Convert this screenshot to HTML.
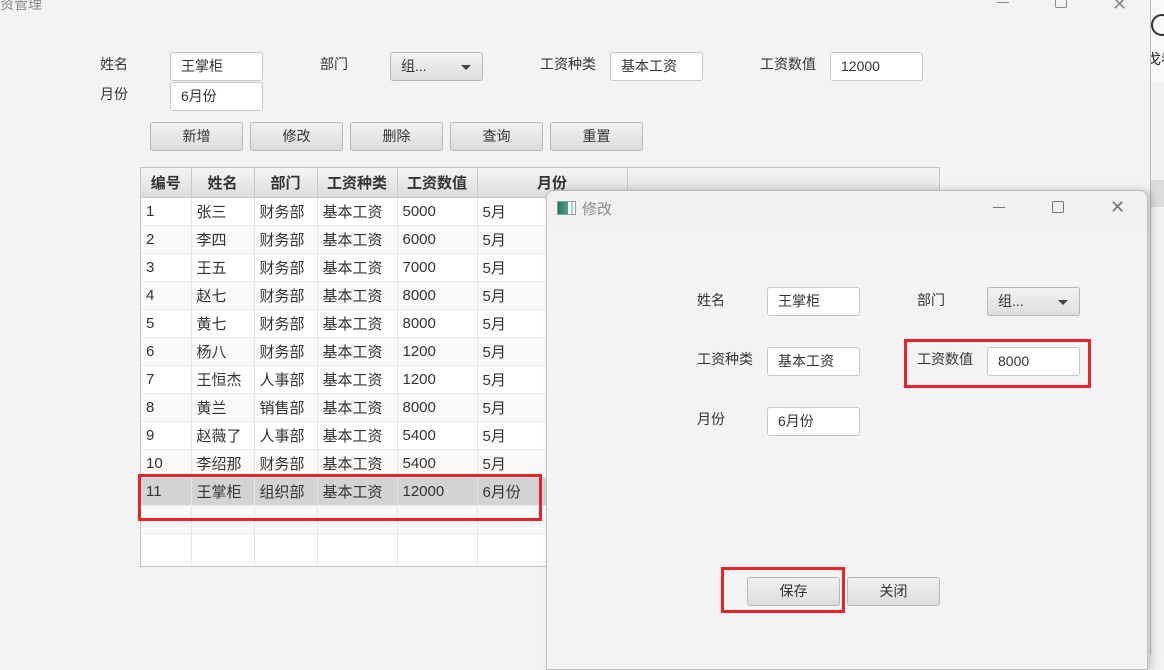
<!DOCTYPE html>
<html><head><meta charset="utf-8"><style>
*{margin:0;padding:0;box-sizing:border-box}
body{width:1164px;height:655px;overflow:hidden;background:#f3f3f3;position:relative;font-family:"Liberation Sans","Noto Sans CJK SC",sans-serif;font-size:14px;color:#333}
.a{position:absolute;white-space:nowrap}
.lbl{position:absolute;font-size:14px;color:#333;line-height:16px;white-space:nowrap}
.inp{position:absolute;height:29px;width:93px;background:#fff;border:1px solid #c8c8c8;border-radius:3px;padding-left:10px;line-height:27px;font-size:14px;color:#333}
.cmb{position:absolute;height:29px;width:93px;background:linear-gradient(#f2f2f2,#dedede);border:1px solid #b8b8b8;border-radius:3px;padding-left:10px;line-height:27px;font-size:14px;color:#333}
.cmb:after{content:"";position:absolute;right:11px;top:12px;border-left:5px solid transparent;border-right:5px solid transparent;border-top:5px solid #444}
.btn{position:absolute;height:29px;width:93px;background:linear-gradient(#f2f2f2,#dcdcdc);border:1px solid #b8b8b8;border-radius:3px;text-align:center;line-height:27px;font-size:14px;color:#333}
.red{position:absolute;border:3px solid #e8212b}
table{border-collapse:collapse;table-layout:fixed}
td{height:28px;border-right:1px solid #e6e6e6;border-bottom:1px solid #ececec;padding-left:5px;font-size:15px;color:#333;white-space:nowrap;overflow:hidden}
th{height:29px;background:linear-gradient(#f4f4f4,#dddddd);border-right:1px solid #c8c8c8;border-bottom:1px solid #c8c8c8;font-size:15px;font-weight:bold;color:#333}
tr.o td{background:#f9f9f9}
tr.w td{background:#fff}
tr.s td{background:#d3d3d3}
</style></head><body>
<div class="a" style="left:0;top:-6px;font-size:14px;color:#8a8a8a">资管理</div>
<div class="a" style="left:997px;top:2px;width:12px;height:1px;background:#888"></div>
<div class="a" style="left:1055px;top:-4px;width:12px;height:12px;border:1px solid #888;border-radius:2px"></div>
<div class="a" style="left:1112px;top:-6px;font-size:18px;color:#888">✕</div>
<div class="a" style="left:1150px;top:0;width:1px;height:655px;background:#b9b9b9"></div>
<div class="a" style="left:1151px;top:0;width:13px;height:82px;background:#f8f8f8;overflow:hidden">
<div class="a" style="left:0;top:14px;width:22px;height:22px;border:2px solid #333;border-radius:50%"></div>
<div class="a" style="left:-4px;top:49px;font-size:14px;color:#222">戈看</div>
</div>
<div class="a" style="left:1151px;top:82px;width:13px;height:573px;background:#f2f2f2"></div>
<div class="a" style="left:1151px;top:180px;width:13px;height:27px;background:#dcdcdc"></div>

<div class="lbl" style="left:100px;top:56px">姓名</div>
<div class="inp" style="left:170px;top:52px">王掌柜</div>
<div class="lbl" style="left:100px;top:86px">月份</div>
<div class="inp" style="left:170px;top:82px">6月份</div>
<div class="lbl" style="left:320px;top:56px">部门</div>
<div class="cmb" style="left:390px;top:52px">组...</div>
<div class="lbl" style="left:540px;top:56px">工资种类</div>
<div class="inp" style="left:610px;top:52px">基本工资</div>
<div class="lbl" style="left:760px;top:56px">工资数值</div>
<div class="inp" style="left:830px;top:52px">12000</div>
<div class="btn" style="left:150px;top:122px">新增</div>
<div class="btn" style="left:250px;top:122px">修改</div>
<div class="btn" style="left:350px;top:122px">删除</div>
<div class="btn" style="left:450px;top:122px">查询</div>
<div class="btn" style="left:550px;top:122px">重置</div>

<div class="a" style="left:140px;top:167px;width:800px;height:400px;border:1px solid #c4c4c4;background:#fff;overflow:hidden">
<table style="width:800px">
<colgroup><col style="width:50px"><col style="width:63px"><col style="width:63px"><col style="width:80px"><col style="width:80px"><col style="width:150px"><col></colgroup>
<tr><th>编号</th><th>姓名</th><th>部门</th><th>工资种类</th><th>工资数值</th><th>月份</th><th></th></tr>
<tr class="w"><td>1</td><td>张三</td><td>财务部</td><td>基本工资</td><td>5000</td><td>5月</td><td></td></tr>
<tr class="o"><td>2</td><td>李四</td><td>财务部</td><td>基本工资</td><td>6000</td><td>5月</td><td></td></tr>
<tr class="w"><td>3</td><td>王五</td><td>财务部</td><td>基本工资</td><td>7000</td><td>5月</td><td></td></tr>
<tr class="o"><td>4</td><td>赵七</td><td>财务部</td><td>基本工资</td><td>8000</td><td>5月</td><td></td></tr>
<tr class="w"><td>5</td><td>黄七</td><td>财务部</td><td>基本工资</td><td>8000</td><td>5月</td><td></td></tr>
<tr class="o"><td>6</td><td>杨八</td><td>财务部</td><td>基本工资</td><td>1200</td><td>5月</td><td></td></tr>
<tr class="w"><td>7</td><td>王恒杰</td><td>人事部</td><td>基本工资</td><td>1200</td><td>5月</td><td></td></tr>
<tr class="o"><td>8</td><td>黄兰</td><td>销售部</td><td>基本工资</td><td>8000</td><td>5月</td><td></td></tr>
<tr class="w"><td>9</td><td>赵薇了</td><td>人事部</td><td>基本工资</td><td>5400</td><td>5月</td><td></td></tr>
<tr class="o"><td>10</td><td>李绍那</td><td>财务部</td><td>基本工资</td><td>5400</td><td>5月</td><td></td></tr>
<tr class="s"><td>11</td><td>王掌柜</td><td>组织部</td><td>基本工资</td><td>12000</td><td>6月份</td><td></td></tr>
<tr class="o"><td></td><td></td><td></td><td></td><td></td><td></td><td></td></tr>
<tr class="w"><td></td><td></td><td></td><td></td><td></td><td></td><td></td></tr>
<tr class="o"><td></td><td></td><td></td><td></td><td></td><td></td><td></td></tr>
</table>
</div>
<div class="red" style="left:138px;top:474px;width:404px;height:47px"></div>

<div class="a" style="left:546px;top:190px;width:602px;height:480px;background:#f3f3f3;border:1px solid #bdbdbd;border-radius:8px 8px 0 0;box-shadow:4px 0 8px rgba(0,0,0,0.18)"></div>
<div class="a" style="left:547px;top:191px;width:600px;height:36px;background:#f2f1f0;border-radius:8px 8px 0 0"></div>
<div class="a" style="left:557px;top:201px;width:19px;height:14px;border:1px solid #999;background:linear-gradient(90deg,#2d6e70 0,#4aa77a 60%,#fff 60%,#fff 80%,#4a8 80%,#4a8 85%,#fff 85%)"></div>
<div class="a" style="left:582px;top:198px;font-size:15px;color:#8a8a8a">修改</div>
<div class="a" style="left:993px;top:207px;width:12px;height:1px;background:#777"></div>
<div class="a" style="left:1052px;top:201px;width:12px;height:12px;border:1px solid #777;border-radius:2px"></div>
<div class="a" style="left:1110px;top:197px;font-size:18px;color:#777">✕</div>

<div class="lbl" style="left:697px;top:292px">姓名</div>
<div class="inp" style="left:767px;top:287px">王掌柜</div>
<div class="lbl" style="left:917px;top:292px">部门</div>
<div class="cmb" style="left:987px;top:287px">组...</div>
<div class="lbl" style="left:697px;top:351px">工资种类</div>
<div class="inp" style="left:767px;top:347px">基本工资</div>
<div class="lbl" style="left:917px;top:351px">工资数值</div>
<div class="inp" style="left:987px;top:347px">8000</div>
<div class="lbl" style="left:697px;top:411px">月份</div>
<div class="inp" style="left:767px;top:407px">6月份</div>
<div class="red" style="left:904px;top:339px;width:187px;height:49px"></div>
<div class="btn" style="left:747px;top:577px">保存</div>
<div class="btn" style="left:847px;top:577px">关闭</div>
<div class="red" style="left:721px;top:567px;width:124px;height:46px"></div>
</body></html>
